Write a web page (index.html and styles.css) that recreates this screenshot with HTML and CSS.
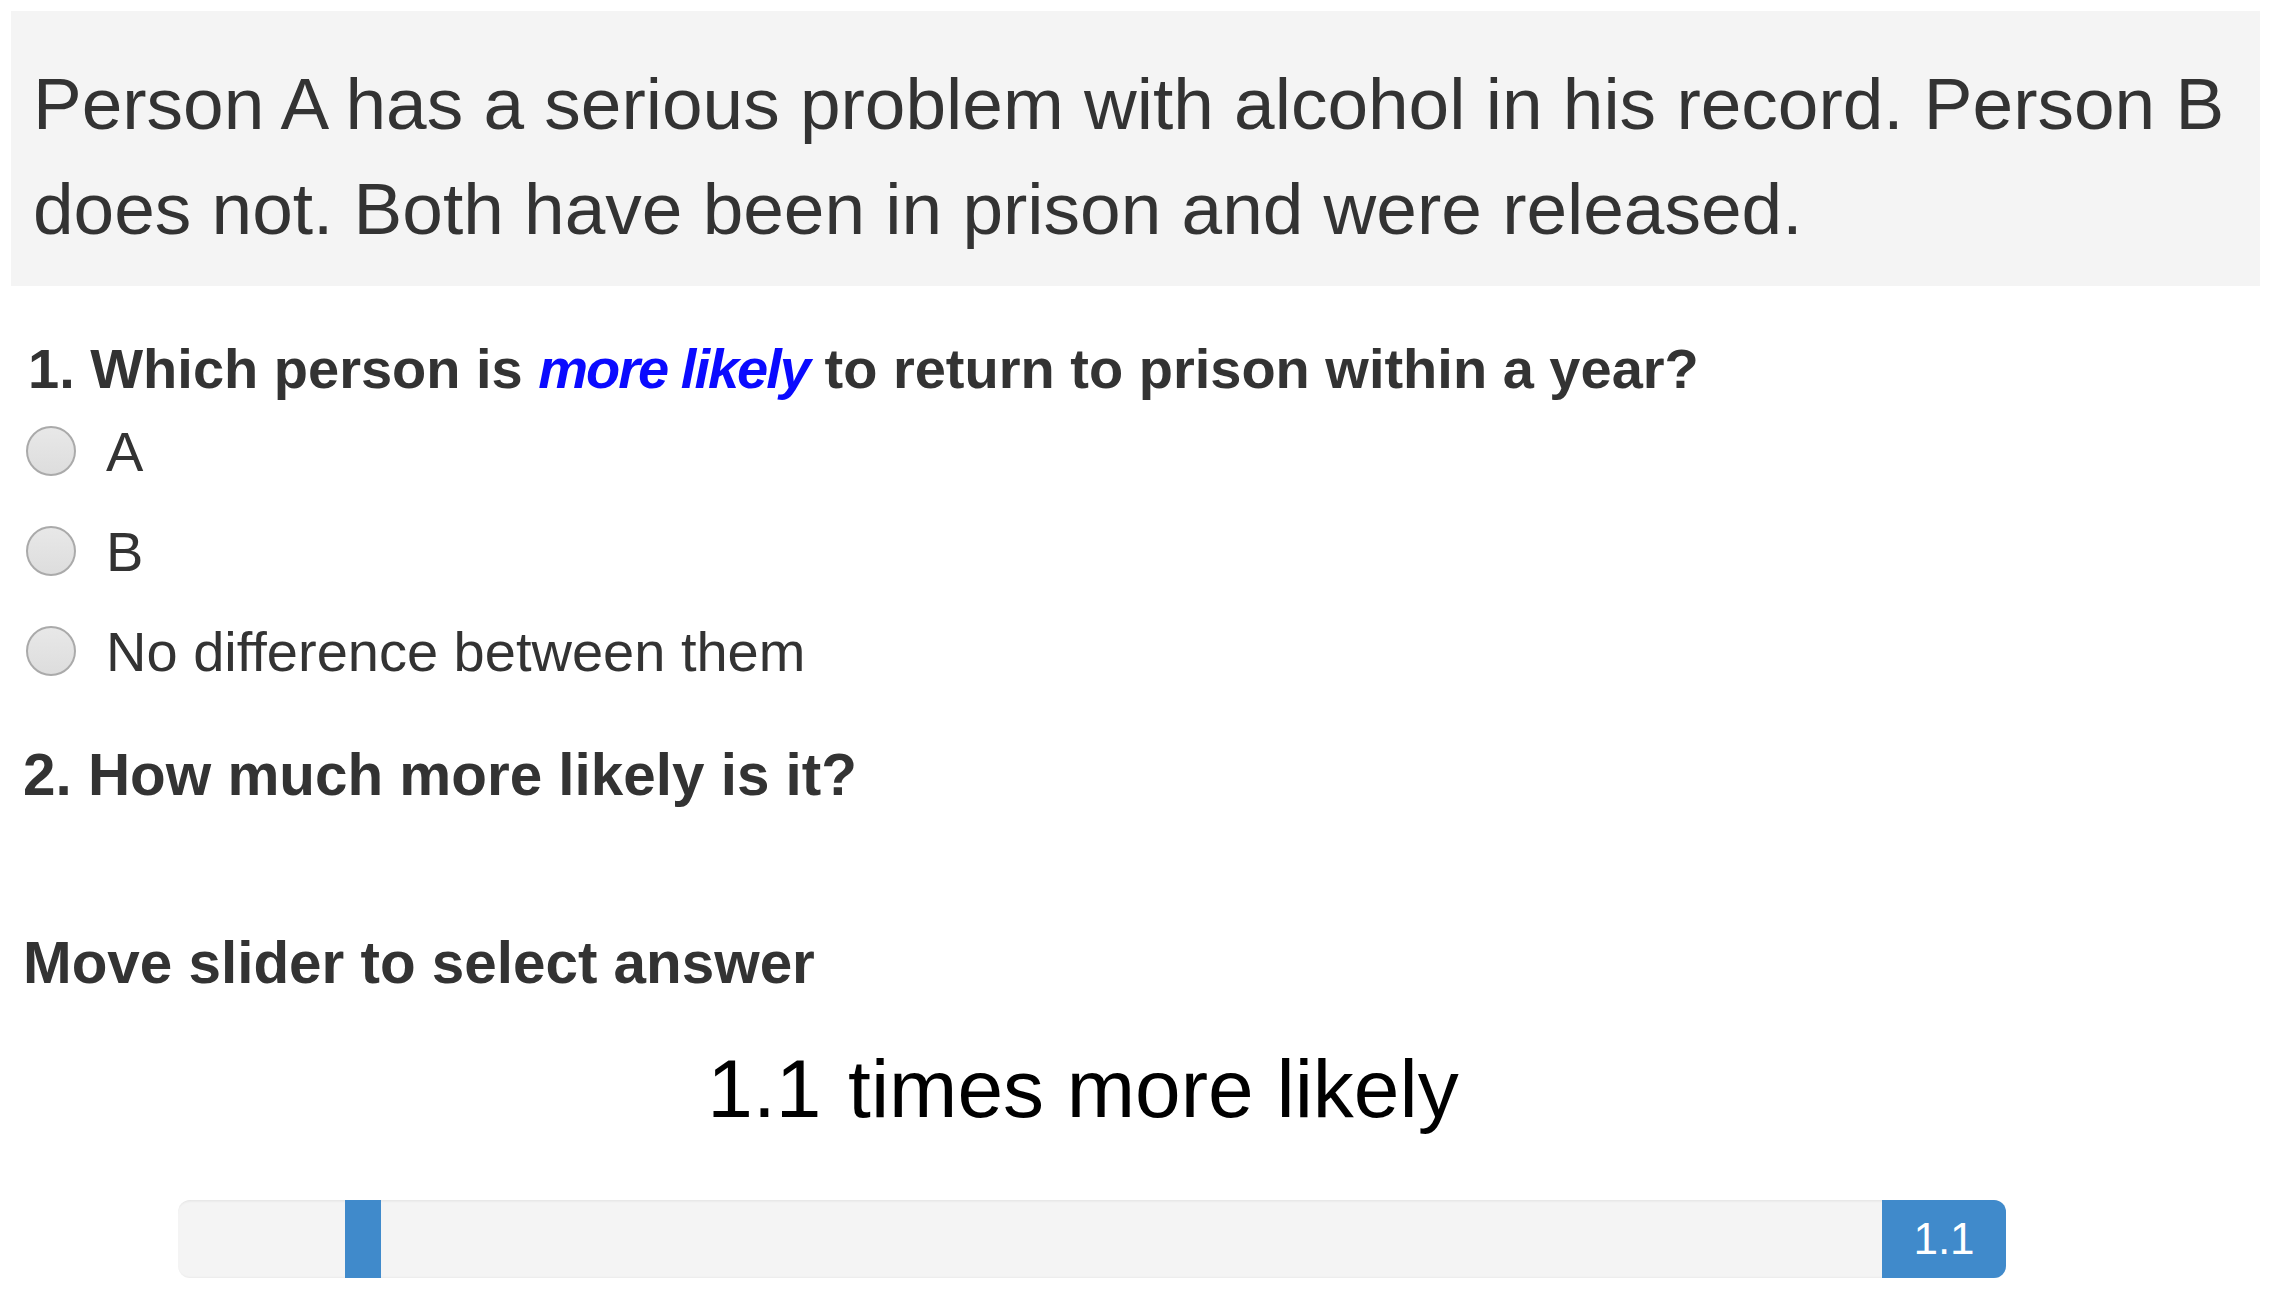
FILE: index.html
```html
<!DOCTYPE html>
<html lang="en">
<head>
<meta charset="utf-8">
<title>Survey question</title>
<link rel="stylesheet" href="styles.css">
</head>
<body>
<div class="page">
  <div class="scenario">Person A has a serious problem with alcohol in his record. Person B does not. Both have been in prison and were released.</div>

  <div class="question q1">1. Which person is <em class="hl">more likely</em> to return to prison within a year?</div>
  <div class="options">
    <label class="option"><input type="radio" name="q1" class="radio"><span>A</span></label>
    <label class="option"><input type="radio" name="q1" class="radio"><span>B</span></label>
    <label class="option"><input type="radio" name="q1" class="radio"><span>No difference between them</span></label>
  </div>

  <div class="question q2">2. How much more likely is it?</div>
  <div class="question q3">Move slider to select answer</div>

  <div class="slider-block">
    <div class="value-text"><span class="num">1.1</span> times more likely</div>
    <div class="track">
      <div class="track-bar">
        <div class="handle" style="left: 167px"></div>
      </div>
      <div class="tag">1.1</div>
    </div>
  </div>
</div>
</body>
</html>
```

FILE: styles.css
```css
html, body {
  margin: 0;
  padding: 0;
  background: #ffffff;
}

body {
  font-family: "Liberation Sans", Arial, sans-serif;
  color: #333333;
}

.page {
  padding: 11px 10px 0 11px;
}

.scenario {
  background: #f4f4f4;
  font-size: 73px;
  line-height: 105px;
  padding: 40px 16px 25px 22px;
}

.question {
  font-weight: bold;
}

.q1 {
  font-size: 56px;
  line-height: 64px;
  margin-top: 51px;
  padding-left: 17px;
}

.hl {
  color: #0a0aff;
  font-style: italic;
  letter-spacing: -2px;
}

.options {
  display: flex;
  flex-direction: column;
}

.option {
  display: flex;
  align-items: center;
  height: 100px;
  font-size: 56px;
  padding-left: 15px;
}

.radio {
  appearance: none;
  -webkit-appearance: none;
  margin: 0 30px 0 0;
  width: 50px;
  height: 50px;
  border-radius: 50%;
  border: 2px solid #aaaaaa;
  background: linear-gradient(180deg, #e8e8e8 0%, #dddddd 100%);
  box-sizing: border-box;
  flex: none;
}

.q2 {
  font-size: 58.4px;
  line-height: 66px;
  margin-top: 41px;
  padding-left: 12px;
}

.q3 {
  font-size: 58.4px;
  line-height: 66px;
  margin-top: 122px;
  padding-left: 12px;
}

.slider-block {
  margin-left: 167px;
  width: 1828px;
}

.value-text {
  margin-top: 47px;
  padding-right: 18px;
  text-align: center;
  font-size: 82px;
  line-height: 92px;
  color: #000000;
}

.num {
  margin-right: 4px;
}

.track {
  margin-top: 65px;
  display: flex;
  height: 78px;
  border-radius: 12px;
  background: #f4f4f4;
  box-shadow: inset 0 3px 3px -2px rgba(0, 0, 0, 0.08), inset 0 -2px 2px -1px rgba(0, 0, 0, 0.04);
}

.track-bar {
  flex: 1;
  position: relative;
}

.handle {
  position: absolute;
  top: 0;
  bottom: 0;
  width: 36px;
  background: #408acb;
}

.tag {
  width: 124px;
  background: #408acb;
  color: #ffffff;
  font-size: 44px;
  display: flex;
  align-items: center;
  justify-content: center;
  border-radius: 0 12px 12px 0;
}
```
